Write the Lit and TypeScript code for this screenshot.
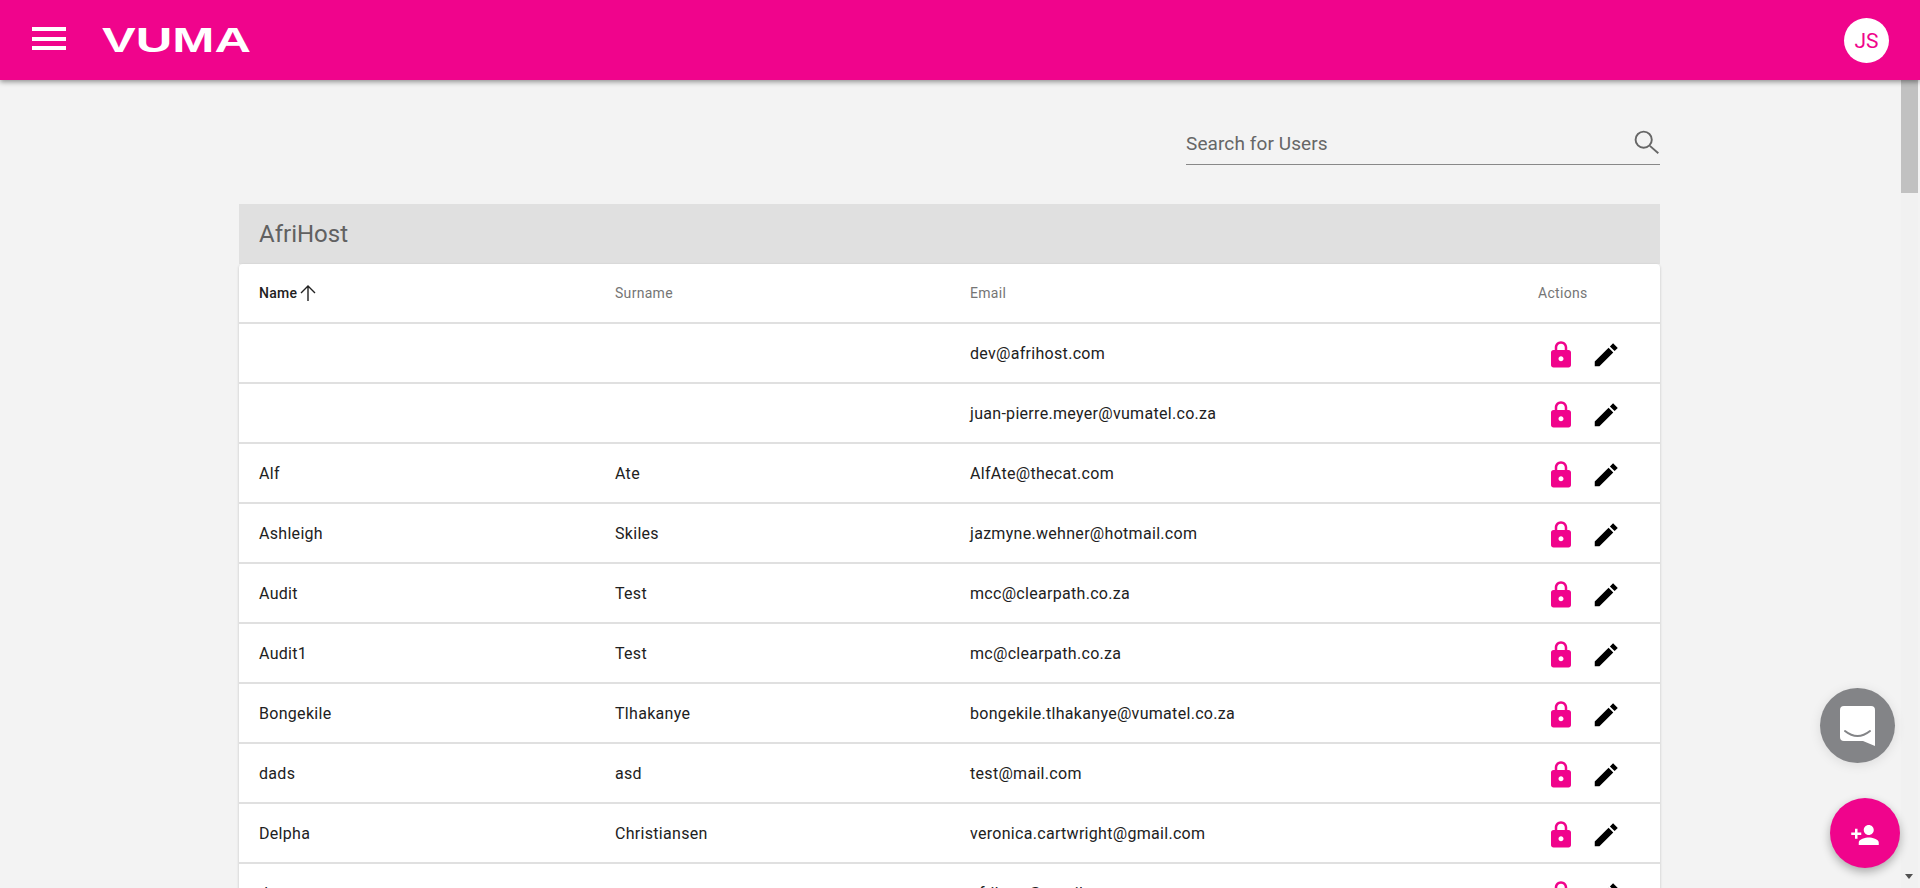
import { LitElement, css, html } from "lit";
import { customElement } from "lit/decorators.js";

const users = [
  ["", "", "dev@afrihost.com"],
  ["", "", "juan-pierre.meyer@vumatel.co.za"],
  ["Alf", "Ate", "AlfAte@thecat.com"],
  ["Ashleigh", "Skiles", "jazmyne.wehner@hotmail.com"],
  ["Audit", "Test", "mcc@clearpath.co.za"],
  ["Audit1", "Test", "mc@clearpath.co.za"],
  ["Bongekile", "Tlhakanye", "bongekile.tlhakanye@vumatel.co.za"],
  ["dads", "asd", "test@mail.com"],
  ["Delpha", "Christiansen", "veronica.cartwright@gmail.com"],
  ["dev", "", "afrihost@gmail.com"],
];

@customElement("app-root")
export class AppRoot extends LitElement {
  static styles = css`
    :host {
      display: block;
      height: 888px;
      overflow: hidden;
      position: relative;
      background: #f3f3f3;
      font-family: "Roboto", "Liberation Sans", sans-serif;
      color: #212121;
    }

    .bar {
      height: 80px;
      background: #f0048c;
      display: flex;
      align-items: center;
      padding: 0 31px 0 32px;
      box-shadow: 0 2px 5px rgba(0, 0, 0, 0.4);
      position: relative;
      z-index: 2;
    }

    .menu {
      width: 34px;
      height: 23px;
      display: flex;
      flex-direction: column;
      justify-content: space-between;
      margin-top: -3px;
    }

    .menu i {
      display: block;
      height: 4px;
      background: #fff;
    }

    .logo {
      margin-left: 36px;
    }

    .logo text {
      font-family: "Liberation Sans", sans-serif;
      font-weight: 700;
      font-size: 35px;
      fill: #fff;
    }

    .avatar {
      margin-left: auto;
      width: 45px;
      height: 45px;
      border-radius: 50%;
      background: #fff;
      color: #f0048c;
      font-size: 21px;
      display: flex;
      align-items: center;
      justify-content: center;
      padding-top: 2px;
      box-sizing: border-box;
    }

    main {
      width: 1421px;
      margin-left: 239px;
    }

    .search {
      width: 474px;
      height: 65px;
      margin: 20px 0 0 auto;
      border-bottom: 1px solid #888;
      box-sizing: border-box;
      display: flex;
      align-items: center;
      justify-content: space-between;
      padding-top: 23px;
      color: #666;
      font-size: 19px;
      letter-spacing: 0.1px;
    }

    .search svg {
      margin-top: -3px;
    }

    .panel {
      margin-top: 39px;
    }

    .title {
      height: 60px;
      background: #e0e0e0;
      color: #616161;
      font-size: 24px;
      line-height: 60px;
      padding-left: 20px;
      box-sizing: border-box;
    }

    .table {
      background: #fff;
      border-radius: 4px 4px 0 0;
      box-shadow: 0 1px 3px rgba(0, 0, 0, 0.2);
    }

    .row {
      display: grid;
      grid-template-columns: 356px 355px 1fr 130px;
      height: 60px;
      align-items: center;
      box-sizing: border-box;
      border-bottom: 2px solid #e0e0e0;
      padding-left: 20px;
      font-size: 16px;
      letter-spacing: 0.3px;
    }

    .head {
      font-size: 14px;
      color: #757575;
    }

    .head .name {
      color: #212121;
      font-weight: 500;
      display: flex;
      align-items: center;
      gap: 3px;
    }

    .head .act {
      padding-left: 8px;
    }

    .actions {
      display: flex;
      align-items: center;
      gap: 15px;
      padding-left: 16px;
    }

    .actions svg {
      margin-top: 4px;
    }

    .fab {
      position: absolute;
      border-radius: 50%;
      display: flex;
      align-items: center;
      justify-content: center;
      z-index: 3;
    }

    .chat {
      left: 1820px;
      top: 688px;
      width: 75px;
      height: 75px;
      background: #838487;
      box-shadow: 0 2px 12px rgba(0, 0, 0, 0.1);
    }

    .add {
      left: 1830px;
      top: 798px;
      width: 70px;
      height: 70px;
      background: #f0048c;
      box-shadow: 0 4px 10px rgba(0, 0, 0, 0.3);
    }

    .add svg {
      margin-top: 4px;
    }

    .scroll {
      position: absolute;
      top: 80px;
      right: 2px;
      bottom: 0;
      width: 17px;
      background: #f1f1f1;
      z-index: 1;
    }

    .thumb {
      width: 17px;
      height: 113px;
      background: #c1c1c1;
    }

    .down {
      position: absolute;
      left: 4px;
      bottom: 9px;
      width: 0;
      height: 0;
      border: 4.5px solid transparent;
      border-top: 5px solid #505050;
      border-bottom: 0;
    }
  `;

  private lock() {
    return html`<svg width="30" height="30" viewBox="0 0 24 24" fill="#f0048c">
      <path d="M18 8h-1V6c0-2.76-2.24-5-5-5S7 3.24 7 6v2H6c-1.1 0-2 .9-2 2v10c0 1.1.9 2 2 2h12c1.1 0 2-.9 2-2V10c0-1.1-.9-2-2-2zm-6 9c-1.1 0-2-.9-2-2s.9-2 2-2 2 .9 2 2-.9 2-2 2zM9 8V6c0-1.66 1.34-3 3-3s3 1.34 3 3v2H9z" />
    </svg>`;
  }

  private pencil() {
    return html`<svg width="30" height="30" viewBox="0 0 24 24" fill="#000">
      <path d="M3 17.25V21h3.75L17.81 9.94l-3.75-3.75L3 17.25zM21.41 6.34l-3.75-3.75-2.53 2.54 3.75 3.75 2.53-2.54z" />
    </svg>`;
  }

  render() {
    return html`
      <header class="bar">
        <div class="menu"><i></i><i></i><i></i></div>
        <svg class="logo" width="152" height="34" viewBox="0 0 152 34">
          <text x="0" y="29" textLength="149" lengthAdjust="spacingAndGlyphs">VUMA</text>
        </svg>
        <div class="avatar">JS</div>
      </header>
      <main>
        <div class="search">
          <span>Search for Users</span>
          <svg width="27" height="27" viewBox="0 0 24 24" fill="none" stroke="#666" stroke-width="1.7">
            <circle cx="9.5" cy="9.5" r="7.2" />
            <path d="M15 15 L22.5 21.5" />
          </svg>
        </div>
        <section class="panel">
          <div class="title">AfriHost</div>
          <div class="table">
            <div class="row head">
              <span class="name">Name
                <svg width="16" height="16" viewBox="0 0 16 16" fill="none" stroke="#212121" stroke-width="1.4">
                  <path d="M8 16 V1 M1 8 L8 1 L15 8" />
                </svg>
              </span>
              <span>Surname</span>
              <span>Email</span>
              <span class="act">Actions</span>
            </div>
            ${users.map(
              (u) => html`<div class="row">
                <span>${u[0]}</span>
                <span>${u[1]}</span>
                <span>${u[2]}</span>
                <span class="actions">${this.lock()}${this.pencil()}</span>
              </div>`,
            )}
          </div>
        </section>
      </main>
      <div class="scroll">
        <div class="thumb"></div>
        <div class="down"></div>
      </div>
      <div class="fab chat">
        <svg width="35" height="40" viewBox="0 0 35 40">
          <path d="M4 0 H31 Q35 0 35 4 V40 L23 35 H4 Q0 35 0 31 V4 Q0 0 4 0 Z" fill="#fff" />
          <path d="M5 25 Q17.5 35 30 25" fill="none" stroke="#838487" stroke-width="2" stroke-linecap="round" />
        </svg>
      </div>
      <div class="fab add">
        <svg width="30" height="30" viewBox="0 0 24 24" fill="#fff">
          <path d="M15 12c2.21 0 4-1.79 4-4s-1.79-4-4-4-4 1.79-4 4 1.79 4 4 4zm-9-2V7H4v3H1v2h3v3h2v-3h3v-2H6zm9 4c-2.67 0-8 1.34-8 4v2h16v-2c0-2.66-5.33-4-8-4z" />
        </svg>
      </div>
    `;
  }
}
